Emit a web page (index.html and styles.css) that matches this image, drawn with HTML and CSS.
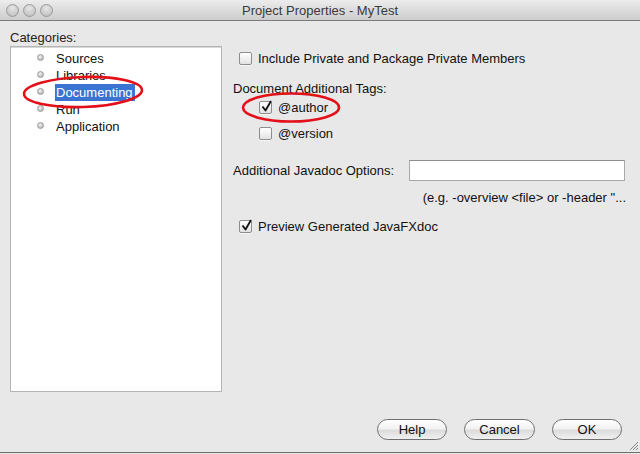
FILE: index.html
```html
<!DOCTYPE html>
<html lang="en">
<head>
    <meta charset="UTF-8">
    <title>Project Properties - MyTest</title>
    <link rel="stylesheet" href="styles.css">
</head>
<body>
    <div class="window">
        <div class="titlebar">
            <div class="lights">
                <span class="light"></span>
                <span class="light"></span>
                <span class="light"></span>
            </div>
            <div class="title">Project Properties - MyTest</div>
        </div>

        <div class="content">
            <div class="categories">
                <div class="cat-label">Categories:</div>
                <ul class="cat-list">
                    <li><span class="bullet"></span><span class="cat-text">Sources</span></li>
                    <li><span class="bullet"></span><span class="cat-text">Libraries</span></li>
                    <li><span class="bullet"></span><span class="cat-text selected">Documenting</span></li>
                    <li><span class="bullet"></span><span class="cat-text">Run</span></li>
                    <li><span class="bullet"></span><span class="cat-text">Application</span></li>
                </ul>
            </div>

            <div class="panel">
                <label class="check row-include">
                    <span class="box"></span>
                    Include Private and Package Private Members
                </label>

                <div class="section-label">Document Additional Tags:</div>
                <label class="check indent row-author">
                    <span class="box checked">
                        <svg viewBox="0 0 13 13" width="13" height="13"><path d="M2.5 6.5 L5.5 10.5 L11 1" fill="none" stroke="#111" stroke-width="1.8" stroke-linejoin="round"/></svg>
                    </span>
                    @author
                </label>
                <label class="check indent row-version">
                    <span class="box"></span>
                    @version
                </label>

                <div class="options-row">
                    <span class="options-label">Additional Javadoc Options:</span>
                    <input type="text" class="options-input">
                </div>
                <div class="hint">(e.g. -overview &lt;file&gt; or -header "...</div>

                <label class="check row-preview">
                    <span class="box checked">
                        <svg viewBox="0 0 13 13" width="13" height="13"><path d="M2.5 6.5 L5.5 10.5 L11 1" fill="none" stroke="#111" stroke-width="1.8" stroke-linejoin="round"/></svg>
                    </span>
                    Preview Generated JavaFXdoc
                </label>
            </div>
        </div>

        <div class="buttons">
            <button class="btn btn-help">Help</button>
            <button class="btn btn-cancel">Cancel</button>
            <button class="btn btn-ok">OK</button>
        </div>

        <svg class="grip" width="10" height="10" viewBox="0 0 10 10">
            <path d="M9 1 L1 9 M9 4 L4 9 M9 7 L7 9" stroke="#8a8a8a" stroke-width="1"/>
        </svg>

        <!-- red annotation marks -->
        <svg class="mark mark-doc" width="124" height="36" viewBox="0 0 124 36">
            <ellipse cx="62" cy="18" rx="59" ry="15" fill="none" stroke="#e3101a" stroke-width="2.6" transform="rotate(-2 62 18)"/>
        </svg>
        <svg class="mark mark-author" width="100" height="33" viewBox="0 0 100 33">
            <ellipse cx="50" cy="16.5" rx="48" ry="14" fill="none" stroke="#e3101a" stroke-width="2.6"/>
        </svg>
    </div>
</body>
</html>
```

FILE: styles.css
```css
* {
    box-sizing: border-box;
}

html, body {
    margin: 0;
    padding: 0;
}

body {
    width: 640px;
    height: 454px;
    background-color: #e8e8e8;
    font-family: "Lucida Grande", "Liberation Sans", Arial, sans-serif;
    font-size: 13px;
    color: #111;
    overflow: hidden;
}

.window {
    position: relative;
    width: 640px;
    height: 453px;
    background-color: #e8e8e8;
    border-bottom: 1px solid #6e6e6e;
    display: flex;
    flex-direction: column;
}

.titlebar {
    height: 21px;
    background: linear-gradient(#ececec, #cdcdcd);
    border-bottom: 1px solid #7c7c7c;
    display: flex;
    align-items: center;
    position: relative;
}

.lights {
    display: flex;
    gap: 4px;
    padding-left: 6px;
}

.light {
    width: 13px;
    height: 13px;
    border-radius: 50%;
    background: radial-gradient(circle at 50% 30%, #e6e6e6, #b9b9b9);
    border: 1px solid #9a9a9a;
}

.title {
    position: absolute;
    left: 0;
    right: 0;
    text-align: center;
    color: #3a3a3a;
    font-size: 13px;
}

.content {
    display: flex;
    height: 371px;
    padding: 9px 0 0 10px;
}

.categories {
    width: 212px;
    display: flex;
    flex-direction: column;
}

.cat-label {
    height: 16px;
    line-height: 16px;
    color: #222;
}

.cat-list {
    list-style: none;
    margin: 0;
    padding: 3px 0 0 0;
    height: 347px;
    background-color: #fff;
    border: 1px solid #b4b4b4;
    box-shadow: inset 0 1px 0 #d8d8d8;
}

.cat-list li {
    height: 17px;
    display: flex;
    align-items: center;
    padding-left: 26px;
}

.bullet {
    width: 7px;
    height: 7px;
    border-radius: 50%;
    background: radial-gradient(circle at 40% 35%, #f4f4f4, #a3a3a3);
    border: 1px solid #9b9b9b;
    margin-right: 11px;
    margin-top: -3px;
}

.cat-text {
    padding: 0 2px 0 1px;
    height: 17px;
    line-height: 17px;
}

.cat-text.selected {
    background-color: #3a73d1;
    color: #fff;
}

.panel {
    flex: 1;
    display: flex;
    flex-direction: column;
    padding-left: 11px;
    padding-top: 20px;
}

.check {
    display: flex;
    align-items: center;
    height: 16px;
    gap: 6px;
    padding-left: 6px;
}

.check.indent {
    padding-left: 26px;
}

.box {
    width: 13px;
    height: 13px;
    border: 1px solid #8d8d8d;
    border-radius: 2px;
    background: linear-gradient(#ffffff, #e2e2e2);
    box-shadow: 0 1px 0 #f6f6f6;
    position: relative;
    flex: none;
}

.box svg {
    position: absolute;
    left: 0;
    top: -2px;
}

.row-include {
    margin-bottom: 15px;
}

.section-label {
    height: 16px;
    line-height: 16px;
    margin-bottom: 2px;
}

.row-author {
    margin-bottom: 10px;
}

.row-version {
    margin-bottom: 18px;
}

.options-row {
    display: flex;
    align-items: center;
    height: 22px;
}

.options-label {
    width: 176px;
}

.options-input {
    width: 216px;
    height: 21px;
    border: 1px solid #a9a9a9;
    border-top-color: #8e8e8e;
    background-color: #fff;
    margin: 0;
    padding: 0 3px;
}

.hint {
    text-align: right;
    padding-right: 14px;
    margin-top: 9px;
    height: 16px;
    line-height: 16px;
}

.row-preview {
    margin-top: 12px;
}

.buttons {
    display: flex;
    justify-content: flex-end;
    gap: 17px;
    padding: 27px 18px 0 0;
}

.btn {
    height: 21px;
    border: 1px solid #6f6f6f;
    border-radius: 11px;
    background: linear-gradient(#ffffff 0%, #f2f2f2 45%, #dcdcdc 55%, #f0f0f0 100%);
    font-family: "Lucida Grande", "Liberation Sans", Arial, sans-serif;
    font-size: 13px;
    color: #111;
    padding: 0;
}

.btn-help {
    width: 70px;
}

.btn-cancel {
    width: 71px;
}

.btn-ok {
    width: 70px;
}

.grip {
    position: absolute;
    right: 1px;
    bottom: 1px;
}

.mark {
    position: absolute;
}

.mark-doc {
    left: 21px;
    top: 74px;
}

.mark-author {
    left: 241px;
    top: 91px;
}
```
